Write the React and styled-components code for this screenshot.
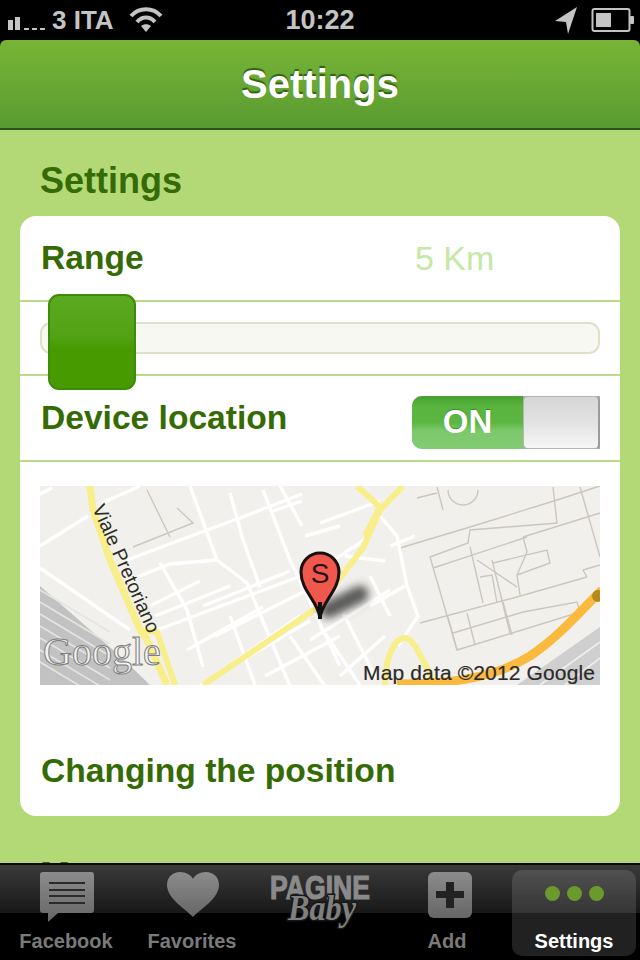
import React from 'react'
import styled, { createGlobalStyle } from 'styled-components'

const GlobalStyle = createGlobalStyle`
    html, body {
        margin: 0;
        padding: 0;
        background: #000;
    }
    * {
        box-sizing: border-box;
    }
`;

const whiteRoads = [
    '150,0 177,74 207,97 250,200',
    '87,74 167,44 200,32 262,8',
    '62,17 100,0',
    '0,82 90,144',
    '0,60 48,30',
    '0,8 12,2',
    '117,144 277,84 300,70 330,50',
    '87,95 130,78 177,74',
    '120,77 147,124 163,181',
    '110,120 160,95',
    '115,130 190,100',
    '147,164 223,121',
    '160,200 260,130',
    '190,7 203,54 220,101',
    '223,4 250,74 300,180',
    '340,30 357,50 367,100 378,130 358,160',
    '270,154 350,104',
    '303,127 337,194',
    '250,150 285,200',
    '280,37 340,15',
    '200,175 270,135',
    '225,190 300,150',
    '233,25 262,15',
    '240,0 262,40',
    '190,130 215,199',
    '163,120 250,85',
    '175,150 265,105',
    '280,140 320,199',
    '300,190 345,150',
    '330,90 350,130',
    '305,70 345,75',
    '350,60 375,50',
    '330,120 365,100',
    '265,50 300,40',
];

const grayRoads = [
    '360,62 430,41 517,14 560,0',
    '513,1 517,37 430,44 428,57 390,71 417,164',
    '403,24 397,1',
    '377,12 397,7',
    '393,82 487,51',
    '430,61 443,117',
    '483,51 487,66 477,89 480,109',
    '453,77 507,64 510,77 477,89',
    '437,74 477,101',
    '440,91 452,89 457,117',
    '452,74 470,147',
    '380,137 477,111 547,91',
    '543,84 560,79 ',
    '543,84 547,91',
    '483,126 537,116 540,126',
    '408,131 417,164 537,127',
    '427,127 435,159',
    '413,147 483,126',
    '463,116 472,149',
    '540,1 560,71',
    '483,51 560,27',
    '107,4 130,51',
    '93,61 153,37 137,22',
];

const MapDrawing = () => (
    <svg width="560" height="199" viewBox="0 0 560 199">
        <defs>
            <filter id="soft"><feGaussianBlur stdDeviation="0.7" /></filter>
            <filter id="softer" filterUnits="userSpaceOnUse" x="0" y="0" width="560" height="199">
                <feGaussianBlur stdDeviation="4" />
            </filter>
        </defs>
        <rect width="560" height="199" fill="#f2f0ec" />
        <g filter="url(#soft)" fill="none">
            <polygon points="0,100 80,170 110,199 0,199" fill="#c2c2c2" stroke="none" />
            <polygon points="477,199 560,141 560,199" fill="#cfcfcf" stroke="none" />
            {[104, 116, 128, 140, 152, 164, 176].map((y) => (
                <line key={y} x1="0" y1={y} x2="70" y2={y + 42} stroke="#e4e4e4" strokeWidth="1.6" />
            ))}
            <line x1="500" y1="199" x2="560" y2="156" stroke="#eee" strokeWidth="1.6" />
            <line x1="525" y1="199" x2="560" y2="172" stroke="#eee" strokeWidth="1.6" />
            {grayRoads.map((p) => (
                <polyline key={p} points={p} stroke="#cbc7bd" strokeWidth="1.4" />
            ))}
            <path d="M408 4a15 15 0 0 0 30 0" stroke="#cbc7bd" strokeWidth="1.4" />
            {whiteRoads.map((p) => (
                <polyline key={p} points={p} stroke="#fff" strokeWidth="3.4" />
            ))}
            <g stroke="#f8ee8a" strokeWidth="6">
                <polyline points="50,0 53,24 70,74 100,144 107,154 127,199" strokeWidth="7" />
                <polyline points="100,144 117,146 135,199" />
                <polyline points="163,199 277,122 323,62 340,24 363,0" />
                <polyline points="317,0 340,21 325,50" />
                <path d="M345 199 C345 170 355 152 365 152 C375 152 385 180 395 199" />
            </g>
            <path d="M357 198 C400 198 450 195 490 170 C520 150 540 125 562 104" stroke="#fbb93c" strokeWidth="9" />
            <circle cx="558" cy="110" r="6" fill="#b58a1e" />
        </g>
        <g fontFamily="'Liberation Sans', sans-serif">
            <text x="52" y="22" fontSize="19.5" fill="#2c2c20" transform="rotate(66 52 22)">Viale Pretoriano</text>
            <text x="3" y="179" fontSize="40" fontFamily="'Liberation Serif', serif" fill="#f2f2f2" stroke="#7d7d7d" strokeWidth="1">Google</text>
            <text x="323" y="194" fontSize="21" fill="#2a2a2a" textLength="232" stroke="#2a2a2a" strokeWidth="0.2">Map data ©2012 Google</text>
        </g>
        <line x1="288" y1="124" x2="320" y2="108" stroke="#5a5a5a" strokeWidth="17" strokeLinecap="round" filter="url(#softer)" />
        <path d="M280 132 C278 115 261 105 261 86 C261 75 270 67 280 67 C290 67 299 75 299 86 C299 105 282 115 280 132 Z" fill="#f0574d" stroke="#1a1010" strokeWidth="3" />
        <line x1="280" y1="116" x2="280" y2="133" stroke="#111" strokeWidth="4" />
        <text x="280" y="97" fontSize="28" textAnchor="middle" fontFamily="'Liberation Sans', sans-serif" fill="#2a1010">S</text>
    </svg>
);

const SignalIcon = () => (
    <svg width="48" height="30" viewBox="0 0 48 30">
        <rect x="8" y="15" width="5" height="10" fill="#c4c4c4" />
        <rect x="15" y="12" width="5" height="13" fill="#c4c4c4" />
        <rect x="24" y="23" width="5" height="2" fill="#c4c4c4" />
        <rect x="32" y="23" width="5" height="2" fill="#c4c4c4" />
        <rect x="40" y="23" width="5" height="2" fill="#c4c4c4" />
    </svg>
);

const WifiIcon = () => (
    <svg width="34" height="28" viewBox="0 0 34 28" fill="none" stroke="#c4c4c4" strokeWidth="4">
        <path d="M2 10 C10 1 24 1 32 10" />
        <path d="M8 16 C13 10 21 10 26 16" />
        <path d="M17 26 L12 20 C15 17.5 19 17.5 22 20 Z" fill="#c4c4c4" stroke="none" />
    </svg>
);

const ArrowIcon = () => (
    <svg width="24" height="28" viewBox="0 0 24 28">
        <path d="M23 1 L1 15 L12 16 L14 28 Z" fill="#c4c4c4" />
    </svg>
);

const BatteryIcon = () => (
    <svg width="46" height="26" viewBox="0 0 46 26">
        <rect x="1.5" y="2" width="37" height="22" rx="2" fill="none" stroke="#c4c4c4" strokeWidth="2" />
        <rect x="5" y="6" width="15" height="14" fill="#c4c4c4" />
        <rect x="39" y="9" width="4" height="8" rx="1" fill="#c4c4c4" />
    </svg>
);

const TabGradient = ({ id }) => (
    <defs>
        <linearGradient id={id} x1="0" y1="0" x2="0" y2="1">
            <stop offset="0" stopColor="#8c8c8c" />
            <stop offset="1" stopColor="#666666" />
        </linearGradient>
    </defs>
);

const ChatIcon = () => (
    <svg width="54" height="50" viewBox="0 0 54 50">
        <TabGradient id="chatFill" />
        <path d="M3 0 H51 A3 3 0 0 1 54 3 V38 A3 3 0 0 1 51 41 H18 L8 50 V41 H3 A3 3 0 0 1 0 38 V3 A3 3 0 0 1 3 0 Z" fill="url(#chatFill)" />
        <g fill="#2a2a2a">
            <rect x="9" y="10" width="36" height="2" />
            <rect x="9" y="17" width="36" height="2" />
            <rect x="9" y="23" width="36" height="2" />
            <rect x="9" y="30" width="36" height="2" />
        </g>
    </svg>
);

const HeartIcon = () => (
    <svg width="52" height="46" viewBox="0 0 52 46">
        <TabGradient id="heartFill" />
        <path d="M26 45 C20 38 0 27 0 13 C0 5 6 0 13 0 C19 0 24 3 26 7 C28 3 33 0 39 0 C46 0 52 5 52 13 C52 27 32 38 26 45 Z" fill="url(#heartFill)" />
    </svg>
);

const AddIcon = () => (
    <svg width="44" height="46" viewBox="0 0 44 46">
        <TabGradient id="addFill" />
        <rect width="44" height="46" rx="6" fill="url(#addFill)" />
        <path d="M18 10 H26 V19 H36 V26 H26 V36 H18 V26 H8 V19 H18 Z" fill="#222" />
    </svg>
);

const LogoMark = () => (
    <svg width="104" height="60" viewBox="0 0 104 60">
        <text x="2" y="26" fontSize="34" fontWeight="700" fontFamily="'Liberation Sans', sans-serif" fill="#8a8a8a" stroke="#8a8a8a" strokeWidth="1.2" textLength="100" lengthAdjust="spacingAndGlyphs">PAGINE</text>
        <text x="20" y="47" fontSize="36" fontWeight="700" fontStyle="italic" fontFamily="'Liberation Serif', serif" fill="#808080" stroke="#161616" strokeWidth="3" paintOrder="stroke" textLength="68" lengthAdjust="spacingAndGlyphs">Baby</text>
    </svg>
);

const App = () => {
    return (
        <Phone>
            <GlobalStyle />
            <StatusBar>
                <StatusLeft>
                    <SignalIcon />
                    <Carrier>3 ITA</Carrier>
                    <WifiIcon />
                </StatusLeft>
                <Clock>10:22</Clock>
                <StatusRight>
                    <ArrowIcon />
                    <BatteryIcon />
                </StatusRight>
            </StatusBar>
            <NavBar>Settings</NavBar>
            <Content>
                <SectionTitle>Settings</SectionTitle>
                <Card>
                    <RangeRow>
                        <RowLabel>Range</RowLabel>
                        <RangeValue>5 Km</RangeValue>
                    </RangeRow>
                    <SliderRow>
                        <Track />
                        <Knob />
                    </SliderRow>
                    <LocationRow>
                        <RowLabel>Device location</RowLabel>
                        <Toggle>
                            <ToggleOn>ON</ToggleOn>
                            <ToggleThumb />
                        </Toggle>
                    </LocationRow>
                    <MapBox>
                        <MapDrawing />
                    </MapBox>
                    <PositionRow>
                        <RowLabel>Changing the position</RowLabel>
                    </PositionRow>
                </Card>
                <SectionTitle $next>Map</SectionTitle>
            </Content>
            <TabBar>
                <Tab>
                    <TabIcon $nudge={1}><ChatIcon /></TabIcon>
                    <TabLabel>Facebook</TabLabel>
                </Tab>
                <Tab>
                    <TabIcon><HeartIcon /></TabIcon>
                    <TabLabel $nudge={-2}>Favorites</TabLabel>
                </Tab>
                <Tab>
                    <TabIcon $logo><LogoMark /></TabIcon>
                </Tab>
                <Tab>
                    <TabIcon $nudge={6}><AddIcon /></TabIcon>
                    <TabLabel>Add</TabLabel>
                </Tab>
                <Tab $active>
                    <TabIcon>
                        <Dots>
                            <Dot />
                            <Dot />
                            <Dot />
                        </Dots>
                    </TabIcon>
                    <TabLabel $active>Settings</TabLabel>
                </Tab>
            </TabBar>
        </Phone>
    )
}

export default App


const Phone = styled.div`
    width: 640px;
    height: 960px;
    display: flex;
    flex-direction: column;
    overflow: hidden;
    background: #000;
    font-family: "Liberation Sans", Arial, sans-serif;
`;
const StatusBar = styled.div`
    height: 40px;
    flex: none;
    display: grid;
    grid-template-columns: 1fr auto 1fr;
    align-items: center;
    color: #c4c4c4;
`;
const StatusLeft = styled.div`
    display: flex;
    align-items: center;
`;
const Carrier = styled.span`
    font-size: 26px;
    margin: 0 15px 0 4px;
    font-weight: 700;
`;
const Clock = styled.span`
    font-size: 27px;
    font-weight: 700;
`;
const StatusRight = styled.div`
    display: flex;
    align-items: center;
    justify-content: flex-end;
    gap: 13px;
    padding-right: 3px;
`;
const NavBar = styled.div`
    height: 90px;
    flex: none;
    display: flex;
    align-items: center;
    justify-content: center;
    background: linear-gradient(#78b535, #5a9b32);
    border-bottom: 2px solid #2c4f1e;
    border-radius: 6px 6px 0 0;
    color: #fff;
    font-size: 40px;
    font-weight: 700;
    text-shadow: 0 -2px 1px #2f5f14;
`;
const Content = styled.div`
    flex: 1;
    min-height: 0;
    overflow: hidden;
    background: #b3d977;
    padding: 30px 20px 0;
`;
const SectionTitle = styled.h2`
    margin: ${(p) => (p.$next ? '39px 0 0' : '0 0 14px')};
    padding-left: 20px;
    font-size: 36px;
    line-height: 42px;
    font-weight: 700;
    color: #356b04;
`;
const Card = styled.div`
    height: 600px;
    background: #fff;
    border-radius: 16px;
    display: flex;
    flex-direction: column;
`;
const RowLabel = styled.span`
    font-size: 33.6px;
    font-weight: 700;
    color: #356b04;
`;
const RangeRow = styled.div`
    height: 86px;
    flex: none;
    display: grid;
    grid-template-columns: 374px 1fr;
    align-items: center;
    padding-left: 21px;
    border-bottom: 2px solid #b9dd87;
`;
const RangeValue = styled.span`
    font-size: 34px;
    color: #c5e8a5;
`;
const SliderRow = styled.div`
    height: 74px;
    flex: none;
    position: relative;
    padding: 20px 20px 0;
    border-bottom: 2px solid #b9dd87;
`;
const Track = styled.div`
    height: 32px;
    background: #f8f8f2;
    border: 2px solid #e2dfc8;
    border-radius: 11px;
`;
const Knob = styled.div`
    position: absolute;
    left: 28px;
    top: -8px;
    width: 88px;
    height: 96px;
    border: 2px solid #3f8a0a;
    border-radius: 11px;
    background: linear-gradient(#5aa91e, #54a317 42%, #479b00 58%, #479b00);
`;
const LocationRow = styled.div`
    height: 86px;
    flex: none;
    display: flex;
    align-items: center;
    justify-content: space-between;
    padding: 0 20px 0 21px;
    border-bottom: 2px solid #b9dd87;
`;
const Toggle = styled.div`
    width: 188px;
    height: 53px;
    margin-top: 8px;
    display: flex;
    border-radius: 10px 0 0 10px;
    overflow: hidden;
    background: #aaa;
`;
const ToggleOn = styled.div`
    width: 111px;
    display: flex;
    align-items: center;
    justify-content: center;
    background: linear-gradient(#45a030, #59b53f 20%, #5cb742 50%, #7cc86a 65%, #82cc72);
    color: #fff;
    font-size: 33px;
    font-weight: 700;
    text-shadow: 0 -1px 1px #3c8a2a;
`;
const ToggleThumb = styled.div`
    flex: 1;
    background: linear-gradient(#d6d6d6, #e2e2e2 50%, #f6f6f6);
    border: 1px solid #b4b4b4;
    border-right: 2px solid #9a9a9a;
    border-radius: 5px;
`;
const MapBox = styled.div`
    height: 199px;
    flex: none;
    margin: 24px 20px 0;
    svg {
        display: block;
    }
`;
const PositionRow = styled.div`
    flex: 1;
    display: flex;
    align-items: center;
    padding: 40px 0 0 21px;
`;
const TabBar = styled.div`
    height: 97px;
    flex: none;
    display: grid;
    grid-template-columns: repeat(5, 124px);
    gap: 3px;
    padding: 5px 4px 4px;
    border-top: 2px solid #0a0a0a;
    background: linear-gradient(#3a3a3a, #181818 48px, #000 48px);
`;
const Tab = styled.div`
    display: flex;
    flex-direction: column;
    align-items: center;
    border-radius: 10px;
    background: ${(p) => (p.$active ? 'rgba(255,255,255,0.13)' : 'transparent')};
`;
const TabIcon = styled.div`
    height: 59px;
    padding-top: ${(p) => (p.$logo ? '3px' : '2px')};
    margin-left: ${(p) => p.$nudge || 0}px;
    display: flex;
    align-items: flex-start;
    justify-content: center;
`;
const TabLabel = styled.span`
    font-size: 20px;
    line-height: 24px;
    font-weight: 700;
    margin-left: ${(p) => p.$nudge || 0}px;
    color: ${(p) => (p.$active ? '#fff' : '#7a7a7a')};
`;
const Dots = styled.div`
    display: flex;
    gap: 7px;
    padding-top: 14px;
`;
const Dot = styled.span`
    width: 15px;
    height: 15px;
    border-radius: 50%;
    background: #6a9a2c;
`;
